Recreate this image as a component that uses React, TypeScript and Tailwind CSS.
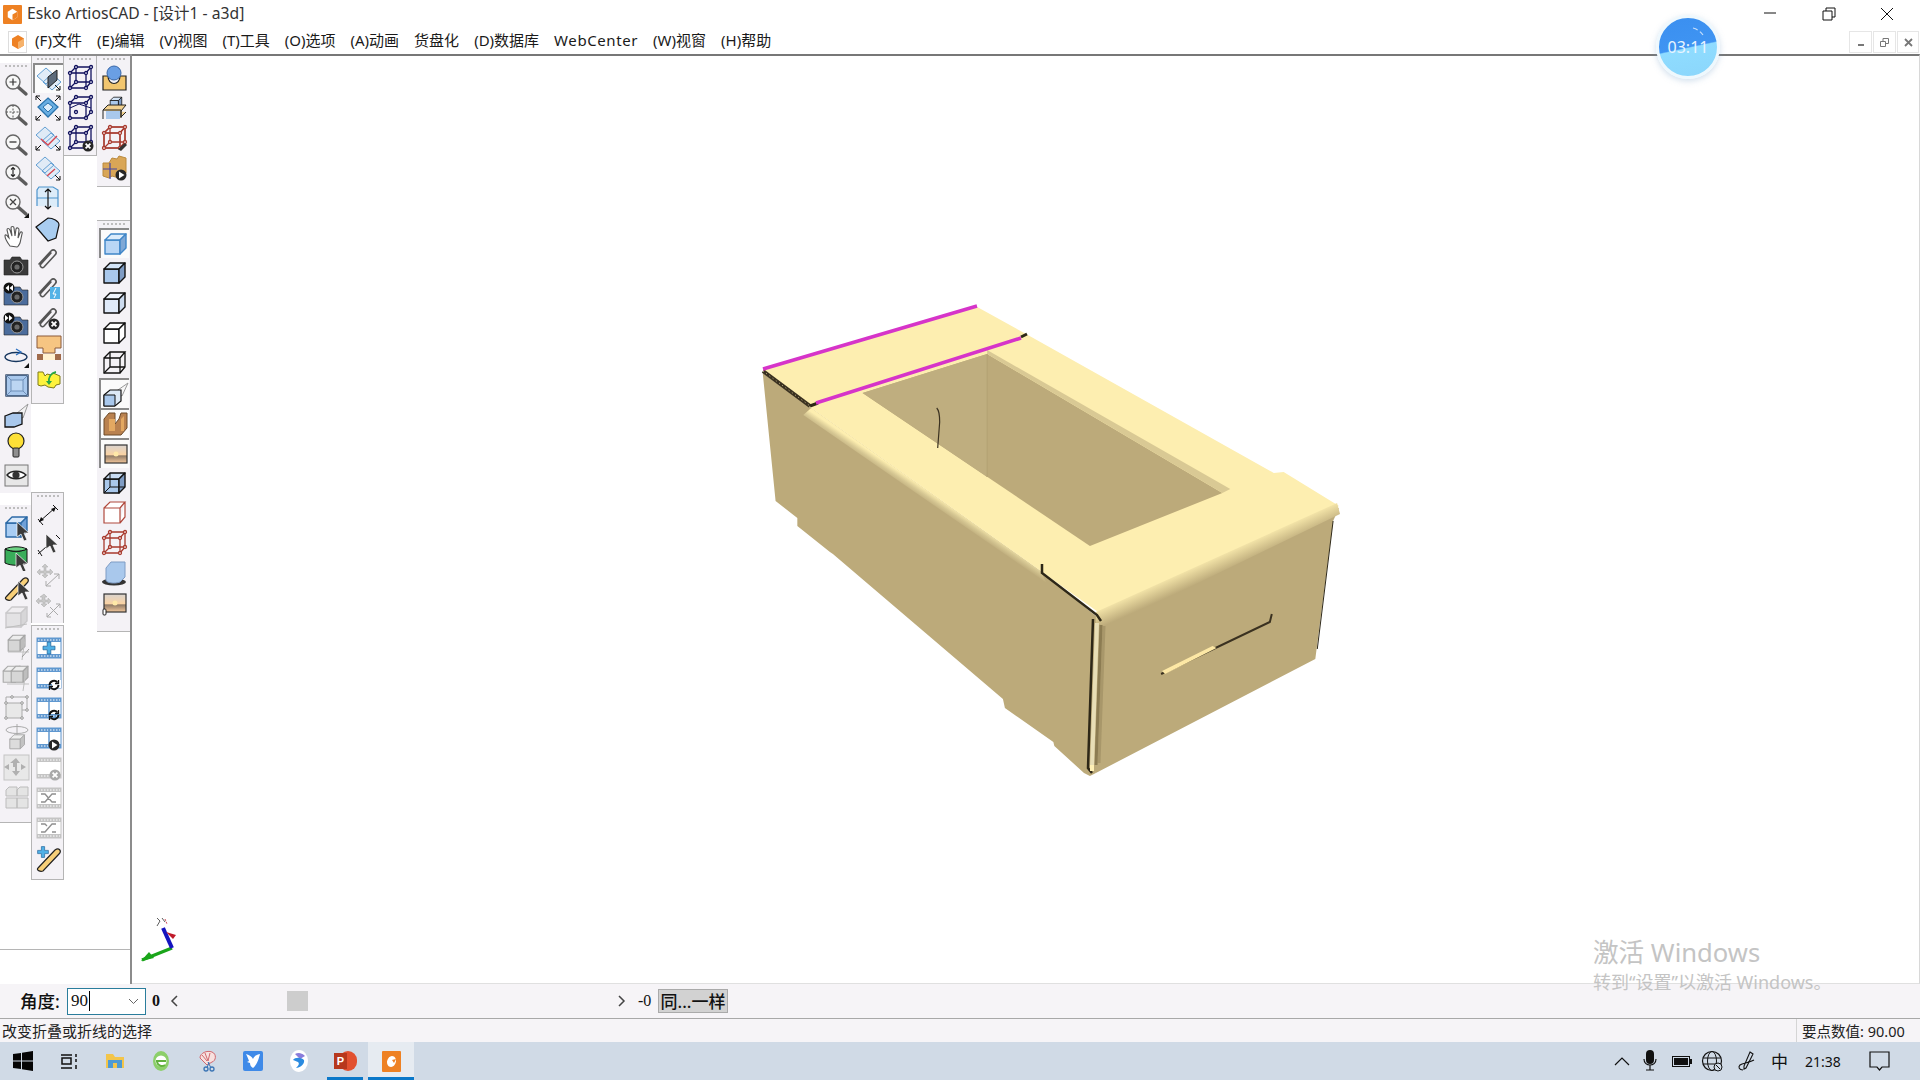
import type { ReactNode } from 'react';

const I = ({ children }: { children: ReactNode }) => (
  <svg width="28" height="28" viewBox="0 0 28 28" className="block">
    {children}
  </svg>
);

// solid cube used all over the view toolbars
const Cube = ({ f = '#a9c8ec', t = '#d3e4f7', s = '#7f9cc4', k = '#111', w = 1.4 }) => (
  <g stroke={k} strokeWidth={w} strokeLinejoin="round">
    <path d="M4 10h15v14H4z" fill={f} />
    <path d="M4 10l6-6h15l-6 6z" fill={t} />
    <path d="M19 10l6-6v14l-6 6z" fill={s} />
  </g>
);

const Wire = ({ k = '#12125e', hidden = true, knobs = false }) => (
  <g stroke={k} strokeWidth="1.3" fill="none">
    <path d="M4 9h16v15H4zM4 9l6-6h15l-5 6M25 3v15l-5 6" />
    {hidden && <path d="M10 3v15H25M10 18l-6 6" />}
    {knobs &&
      [[4, 9], [20, 9], [4, 24], [20, 24], [10, 3], [25, 3], [25, 18], [10, 18]].map(([x, y]) => (
        <circle key={`${x}-${y}`} cx={x} cy={y} r="1.5" fill="#fff" />
      ))}
  </g>
);

const Mag = ({ children }: { children?: ReactNode }) => (
  <I>
    <path d="M16 16l8 7" stroke="#5c5c5c" strokeWidth="3.4" strokeLinecap="round" />
    <circle cx="11" cy="11" r="7" fill="#f7f7f7" stroke="#666" strokeWidth="1.4" />
    {children}
  </I>
);

const Fold = ({ line, dark }: { line?: string; dark?: boolean }) => (
  <g fill="#dbe9f6" stroke="#63a0d4" strokeWidth="1">
    <path d="M2 11l9-8 9 8-9 8zM8 17l9-8 9 8-9 8z" fillOpacity="0.8" />
    {line && <path d="M7 15l7 6 9-9" fill="none" stroke={line} strokeWidth="1.4" />}
    {dark && <path d="M13 12l9-7v10l-9 8z" fill="#5d6b7b" stroke="#222" />}
  </g>
);

const Corner = ({ x, y, r = 0 }: { x: number; y: number; r?: number }) => (
  <path d="M0 0h4M0 0v4M0 0l5 5" transform={`translate(${x} ${y}) rotate(${r})`} stroke="#111" strokeWidth="1" fill="none" />
);

const Cursor = ({ x = 14, y = 8 }: { x?: number; y?: number }) => (
  <path
    d="M0 0v15l4-3 3 7 3-1-3-7h5z"
    transform={`translate(${x} ${y})`}
    fill="#3a3a3a"
    stroke="#fff"
    strokeWidth="0.7"
  />
);

const Badge = ({ kind, x = 20, y = 20 }: { kind: 'x' | 'play' | 'rot' | 'xg'; x?: number; y?: number }) => {
  if (kind === 'rot')
    return (
      <g transform={`translate(${x} ${y})`} fill="none" stroke="#111" strokeWidth="1.9">
        <path d="M-4.5 0a4.5 4.5 0 0 1 8-2.5M4.5 0a4.5 4.5 0 0 1-8 2.5" />
        <path d="M4.5-5v3.5h-3.5M-4.5 5v-3.5h3.5" strokeWidth="1.3" />
      </g>
    );
  return (
    <g transform={`translate(${x} ${y})`}>
      <circle r="5.5" fill={kind === 'xg' ? '#a9a9a9' : '#262626'} />
      {kind === 'play' ? (
        <path d="M-2-3.5l5.5 3.5-5.5 3.5z" fill="#fff" />
      ) : (
        <path d="M-2.4-2.4l4.8 4.8M2.4-2.4l-4.8 4.8" stroke="#fff" strokeWidth="1.8" />
      )}
    </g>
  );
};

const Clip = ({ c = '#555' }: { c?: string }) => (
  <path
    d="M5 19L17 6c3-3 7 1 4 4L10 22c-2 2-5-1-3-3l10-11"
    fill="none"
    stroke={c}
    strokeWidth="1.6"
    strokeLinecap="round"
  />
);

const Camera = ({ c = '#3a3a3a', arrow }: { c?: string; arrow?: 'l' | 'r' }) => (
  <I>
    <path d="M2 9h6l2-3h8l2 3h6v15H2z" fill={c} stroke="#222" strokeWidth="0.6" />
    <circle cx="15" cy="16" r="6" fill="#222" stroke="#999" strokeWidth="1" />
    <circle cx="15" cy="16" r="2.6" fill="#6a6a6a" />
    {arrow && (
      <g>
        <circle cx="7" cy="7" r="5.5" fill="#111" />
        <path d={arrow === 'l' ? 'M7 4L3.5 7 7 10zM11 4L7.500 7l3.500 3z' : 'M3 4l3.500 3L3 10zM7 4l3.500 3L7 10z'} fill="#fff" />
      </g>
    )}
  </I>
);

const Film = ({ split, c = '#5f97cf', children }: { split?: boolean; c?: string; children?: ReactNode }) => (
  <g>
    <rect x="3" y="4" width="24" height="20" fill="#fff" stroke={c} strokeWidth="1" />
    <rect x="3" y="4" width="24" height="4" fill={c} />
    <rect x="3" y="20" width="24" height="4" fill={c} />
    <path d="M4 6h22M4 22h22" stroke="#fff" strokeWidth="1" strokeDasharray="1.500 1.500" />
    {split && <path d="M15 4v20" stroke={c} strokeWidth="1.500" />}
    {children}
  </g>
);

const Plus = ({ x = 15, y = 14, s = 1 }: { x?: number; y?: number; s?: number }) => (
  <path
    d="M-1.800-6h3.600v4.200H6v3.600H1.800V6h-3.600V1.800H-6v-3.600h4.200z"
    transform={`translate(${x} ${y}) scale(${s})`}
    fill="#4fb0e6"
    stroke="#1b5e94"
    strokeWidth="0.7"
  />
);

const Tape = () => <path d="M4 24L21 6c4-3 7 1 4 4L9 27c-3 1-7-1-5-3z" fill="#f7cf78" stroke="#222" strokeWidth="1.200" />;

const Sun = () => (
  <g>
    <defs>
      <linearGradient id="sun" x1="0" y1="0" x2="0" y2="1">
        <stop offset="0" stopColor="#d9d3cf" />
        <stop offset="0.55" stopColor="#fbd3a3" />
        <stop offset="0.6" stopColor="#8f7a66" />
        <stop offset="0.68" stopColor="#a58b72" />
        <stop offset="1" stopColor="#f3c79b" />
      </linearGradient>
    </defs>
    <rect x="4" y="5" width="22" height="18" fill="url(#sun)" stroke="#333" strokeWidth="1.200" />
    <circle cx="15" cy="14" r="2.500" fill="#ffe9a8" />
  </g>
);

const G = '#bfbfbf';
const Col1A: ReactNode[] = [
  <Mag><path d="M7.500 11h7M11 7.500v7" stroke="#333" strokeWidth="1.200" /></Mag>,
  <Mag><path d="M4 11h14M11 4v14" stroke="#555" strokeWidth="1" strokeDasharray="2 1.500" /></Mag>,
  <Mag><path d="M7.500 11h7" stroke="#333" strokeWidth="1.300" /></Mag>,
  <Mag><path d="M11 6.500v9M9 8.500l2-2 2 2M9 13.500l2 2 2-2" stroke="#222" strokeWidth="1.100" fill="none" /></Mag>,
  <Mag><path d="M8 8l6 6M14 8l-6 6" stroke="#444" strokeWidth="1.300" /><path d="M27 27v-5l-5 5z" fill="#111" /></Mag>,
  <I><path d="M8 25c-3-4-5-8-5-10 0-2 2-1 3 1l1 1-2-8c0-2 2-2 3 0l2 6-1-8c0-2 3-2 3 0l1 8 1-7c1-2 3-1 3 1l-1 8 2-5c1-2 3-1 2 1l-2 9c-1 2-2 4-3 4z" fill="#fff" stroke="#555" strokeWidth="1.100" /></I>,
  <Camera />,
  <Camera c="#4b6c9c" arrow="l" />,
  <Camera c="#4b6c9c" arrow="r" />,
  <I><ellipse cx="14" cy="16" rx="11" ry="4.500" fill="none" stroke="#16365e" strokeWidth="1.300" /><path d="M14 8l5 3-5 3" fill="none" stroke="#2b6fc0" strokeWidth="1.300" /><path d="M27 27v-5l-5 5z" fill="#111" /></I>,
  <I><rect x="4" y="4" width="22" height="21" fill="#a9c8ec" stroke="#1d3556" strokeWidth="1.300" /><rect x="9" y="9" width="12" height="11" fill="#bcd6f2" stroke="#6f8fb8" /><path d="M4 4l5 5M26 4l-5 5M4 25l5-5M26 25l-5-5" stroke="#6f8fb8" /></I>,
  <I><path d="M14 13L26 3l-5 14z" fill="#f2f2f2" stroke="#999" /><path d="M3 15l8-3h9v11l-8 3H3z" fill="#a9c8ec" stroke="#111" strokeWidth="1.300" /></I>,
  <I><circle cx="14" cy="10" r="8" fill="#fde036" stroke="#222" strokeWidth="1.200" /><rect x="11" y="17" width="6" height="9" rx="1" fill="#8f8f8f" stroke="#222" /></I>,
  <I><rect x="3" y="4" width="23" height="21" fill="#e7e7e7" stroke="#777" /><path d="M5 14c4-5 14-5 19 0-5 5-15 5-19 0z" fill="#fff" stroke="#222" strokeWidth="1.400" /><circle cx="14" cy="14" r="3.600" fill="#333" /></I>,
];

const Col1B: ReactNode[] = [
  <I><Cube f="#a9cdf3" t="#d9e9fa" s="#6fa0d8" k="#2c6aa6" /><Cursor x={15} y={9} /></I>,
  <I><path d="M3 6c6 3 16 3 22 0v14c-6 3-16 3-22 0z" fill="#39ad5a" stroke="#111" /><path d="M3 6c6-3 16-3 22 0-6 3-16 3-22 0z" fill="#6dd284" stroke="#111" /><Cursor x={14} y={10} /></I>,
  <I><Tape /><Cursor x={16} y={8} /></I>,
  <I><g opacity="0.45"><Cube f="#cfcfcf" t="#e9e9e9" s="#b5b5b5" k="#999" /></g><path d="M3 25l22-4" stroke={G} strokeWidth="1" /></I>,
  <I><g transform="translate(3 -1) scale(.8)"><Cube f="#d6d6d6" t="#ededed" s="#bdbdbd" k="#a5a5a5" /></g><path d="M6 19h21M23 6l-3 21" stroke={G} /><path d="M20 24l7-8" stroke="#999" /></I>,
  <I><g transform="translate(-2 0) scale(.8)"><Cube f="#e2e2e2" t="#f0f0f0" s="#c9c9c9" k="#aaa" /></g><g transform="translate(6 0) scale(.8)"><Cube f="#d6d6d6" t="#ededed" s="#bdbdbd" k="#a5a5a5" /></g><path d="M5 21h22M24 8l-3 20" stroke={G} /></I>,
  <I><rect x="4" y="10" width="16" height="15" fill="#e8e8e8" stroke="#aaa" /><path d="M4 10V4h21v13h-5" fill="none" stroke="#aaa" /><g fill="#eee" stroke="#999">{[[4, 10], [20, 10], [4, 25], [20, 25], [10, 4], [25, 4], [25, 17]].map(([x, y]) => <circle key={`${x}${y}`} cx={x} cy={y} r="1.300" />)}</g></I>,
  <I><g transform="translate(5 9) scale(.7)"><Cube f="#dcdcdc" t="#efefef" s="#c2c2c2" k="#aaa" /></g><ellipse cx="15" cy="7" rx="11" ry="3.500" fill="none" stroke="#aaa" /><path d="M15 1v11" stroke="#aaa" /></I>,
  <I><rect x="2" y="2" width="25" height="25" fill="#e8e8e8" stroke="#c4c4c4" /><path d="M14 5l4 5h-3v4h4v-3l5 3-5 3v-3h-4v4h3l-4 5-4-5h3v-4H7v3l-5-3 5-3v3h4v-4H8z" fill="#b0b0b0" /></I>,
  <I><g fill="#e4e4e4" stroke="#bcbcbc"><path d="M4 7l3-3h8v9H4zM15 7l3-3h8v9H15zM4 15h11v10H4zM15 15h11v10H15z" /></g></I>,
];

const Col2A: ReactNode[] = [
  <I><Fold dark /><Corner x={25} y={25} r={180} /></I>,
  <I><path d="M14 4l10 9-10 10L4 13z" fill="#69aee2" stroke="#2b74ad" strokeWidth="1.300" /><path d="M14 9l5 4-5 5-5-5z" fill="#dcecf9" stroke="#2b74ad" /><Corner x={2} y={2} /><Corner x={26} y={2} r={90} /><Corner x={2} y={26} r={270} /><Corner x={26} y={26} r={180} /></I>,
  <I><Fold line="#d8454f" /><Corner x={2} y={26} r={270} /><Corner x={26} y={26} r={180} /></I>,
  <I><Fold /><path d="M13 22l8-7" stroke="#d8454f" strokeWidth="1.400" /><Corner x={26} y={26} r={180} /></I>,
  <I><path d="M3 22V6l2-3h14l5 3v17M3 14h21" fill="#dcecf9" stroke="#4d94cc" strokeWidth="1.200" /><path d="M14 5v20M11 8l3-3 3 3M11 22l3 3 3-3" fill="none" stroke="#111" strokeWidth="1.200" /></I>,
  <I><path d="M2 13l12-9c5 0 11 3 11 7l-3 13-8 3z" fill="#a9cdf0" stroke="#111" strokeWidth="1.200" /></I>,
  <I><g transform="translate(0 1)"><Clip /></g></I>,
  <I><Clip /><rect x="16" y="13" width="10" height="12" fill="#53b2e6" /><path d="M22 14l-3 6h3l-2 4" stroke="#fff" fill="none" /></I>,
  <I><Clip /><Badge kind="x" x={20} y={20} /></I>,
  <I><path d="M3 2h24v12h-6v5H9v-5H3z" fill="#f6c582" stroke="#8b5a3a" /><rect x="3" y="20" width="24" height="6" fill="#fff1cf" /><rect x="3" y="20" width="6" height="6" fill="#a06b4b" /><rect x="21" y="20" width="6" height="6" fill="#a06b4b" /></I>,
  <I><path d="M4 8h5l2 4 2-2 4 1 2-2 7 3v8l-4 1-2 3-6-1-3-2-4 1-3-1z" fill="#fdf23d" stroke="#7e7a1a" /><path d="M15 19c-1-6 2-10 7-11" fill="none" stroke="#28a745" strokeWidth="1.800" /><path d="M12 17l3 4 3-4z" fill="#28a745" /></I>,
];

const Col2B: ReactNode[] = [
  <I><path d="M5 21L22 6M4 18l5 6M19 4l5 5" stroke="#111" strokeWidth="1" fill="none" /><path d="M5 21l2-5 3 3zM22 6l-5 2 3 3z" fill="#111" /></I>,
  <I><path d="M4 23l8-7M4 19l4 6M22 4l4 4" stroke="#111" strokeWidth="1" /><Cursor x={12} y={3} /></I>,
  <I><path d="M11 3l3 3h-2v4h4V8l3 3-3 3v-2h-4v2h2l-3 3-3-3h2v-2H6v2l-3-3 3-3v2h4V6H8z" fill="#c8c8c8" stroke="#aaa" strokeWidth="0.500" /><path d="M12 25L25 13M25 13v5M25 13h-5M12 25v-5M12 25h5" stroke="#aaa" fill="none" /></I>,
  <I><path d="M10 3l3 3h-2v3h3V7l3 3-3 3v-2h-3v2h2l-3 3-3-3h2v-2H5v2l-3-3 3-3v2h3V6H6z" fill="#c8c8c8" stroke="#aaa" strokeWidth="0.500" /><path d="M13 26l13-13M26 13v4M26 13h-4M13 26v-4M13 26h4M16 16l8 8" stroke="#aaa" fill="none" /></I>,
];

const Col2C: ReactNode[] = [
  <I><Film><Plus /></Film></I>,
  <I><Film><path d="M18 16h9v8h-9z" fill="#fff" /><Badge kind="rot" x={20} y={21} /></Film></I>,
  <I><Film split><Badge kind="rot" x={20} y={21} /></Film></I>,
  <I><Film split><Badge kind="play" x={20} y={21} /></Film></I>,
  <I><Film c="#c4c4c4"><Badge kind="xg" x={21} y={21} /></Film></I>,
  <I><Film c="#c4c4c4"><path d="M7 10h4l7 8h4M7 18h4l7-8h4" stroke="#8f8f8f" strokeWidth="1.300" fill="none" /></Film></I>,
  <I><Film c="#c4c4c4"><path d="M22 10h-4l-7 8H7M7 10h4l2 2M18 18h4" stroke="#8f8f8f" strokeWidth="1.300" fill="none" /></Film></I>,
  <I><Tape /><Plus x={9} y={8} s={0.9} /></I>,
];

const Col3: ReactNode[] = [
  <I><Wire knobs /></I>,
  <I><Wire knobs hidden={false} /><path d="M4 14l9-4 12 4" stroke="#12125e" fill="none" /></I>,
  <I><Wire knobs /><Badge kind="x" x={22} y={22} /></I>,
];

const Col4A: ReactNode[] = [
  <I><path d="M3 12h5c0 10 12 10 12 0h6v14H3z" fill="#f2c66f" stroke="#222" strokeWidth="1.200" /><circle cx="14" cy="9" r="7" fill="#6a9fe4" stroke="#3967a8" /></I>,
  <I><g transform="translate(8 1) scale(.55)"><Cube /></g><path d="M3 16l5-5h18l-5 6v6l5-5M3 16h18v8M3 16v9" fill="#f2d18f" stroke="#222" /><rect x="6" y="17" width="14" height="8" fill="#a9c8ec" /></I>,
  <I><g><path d="M4 9h16v15H4zM4 9l6-6h15l-5 6M25 3v15l-5 6" fill="none" stroke="#a83a2e" strokeWidth="1.200" /></g><Wire k="#a83a2e" knobs /><path d="M18 25l7-6 2 2-6 6z" fill="#333" /></I>,
  <I><path d="M3 9h6l3-5 5 1 2-3 7 2v15l-5 1-2 4-7-2-3 2-6-2z" fill="#d9a657" stroke="#b98a3f" /><path d="M3 15h14M10 9v16" stroke="#4246a8" strokeWidth="1.200" /><Badge kind="play" x={21} y={21} /></I>,
];

const Col4B: ReactNode[] = [
  <I><Cube f="#b9d6f5" t="#dcecfb" s="#7fa8d6" k="#3f86c8" /></I>,
  <I><Cube /></I>,
  <I><Cube f="#dfeafa" t="#eef4fc" s="#ccdbef" /></I>,
  <I><Cube f="#fff" t="#fff" s="#fff" /></I>,
  <I><Wire k="#111" /></I>,
  <I><path d="M14 12L27 3l-6 13z" fill="#f7f7f7" stroke="#999" /><path d="M3 15l6-5h11v11l-6 5H3z" fill="#dde9f6" stroke="#111" strokeWidth="1.200" /><path d="M3 15h11v11H3z" fill="#a9c8ec" stroke="#111" /></I>,
  <I><path d="M3 9l5-6h6v11l4-5 2-6h6v15l-6 7H3z" fill="#b9814f" stroke="#6c4a2a" /><path d="M8 9v12h6V9zM20 9v12h3V6z" fill="#e3a861" /></I>,
  <I><Sun /></I>,
  <I><g><Cube f="#a9c8ec" t="#c9dcf3" s="#7f9cc4" /></g><path d="M10 4v14h15M10 18l-6 6" stroke="#111" fill="none" /></I>,
  <I><path d="M4 9h16v15H4zM4 9l6-6h15l-5 6M25 3v15l-5 6M4 13" fill="#fff" stroke="#b0493d" strokeWidth="1.200" /></I>,
  <I><Wire k="#a83a2e" knobs /></I>,
  <I><ellipse cx="14" cy="23" rx="12" ry="3.500" fill="#333" /><path d="M6 9l5-6h14v15l-5 5c-5 2-14 1-14-2z" fill="#a9c8ec" stroke="#7f9cc4" /></I>,
  <I><Sun /><rect x="3" y="20" width="3" height="6" rx="1" fill="#fff" stroke="#222" /></I>,
];

const Toolbar = ({ items, pressed = [], className }: { items: ReactNode[]; pressed?: number[]; className: string }) => (
  <div className={`flex flex-col items-center bg-[#f4f2f6] ${className}`}>
    <div className="h-[5px] w-[22px] shrink-0 mt-[2px] border-t-2 border-dotted border-[#bdbdbd]" />
    {items.map((it, i) => (
      <div
        key={i}
        className={`flex items-center justify-center h-[30px] w-[30px] shrink-0 ${
          pressed.includes(i) ? 'border-t-2 border-l-2 border-[#8a8a8a] bg-[#fbfbfb]' : ''
        }`}
      >
        {it}
      </div>
    ))}
  </div>
);

function Box() {
  return (
    <svg className="absolute left-[608px] top-[235px]" width="620" height="500" viewBox="740 290 620 500">
      <defs>
        <linearGradient id="bevelFront" gradientUnits="userSpaceOnUse" x1="1224" y1="552" x2="1232" y2="570">
          <stop offset="0" stopColor="#fdeeb0" />
          <stop offset="1" stopColor="#bcaa7a" />
        </linearGradient>
        <linearGradient id="bevelLeft" gradientUnits="userSpaceOnUse" x1="928" y1="488" x2="922" y2="497">
          <stop offset="0" stopColor="#fdeeb0" />
          <stop offset="0.5" stopColor="#d6c793" />
          <stop offset="1" stopColor="#bcaa7a" />
        </linearGradient>
      </defs>
      <g transform="translate(740 0) scale(0.9885 1) translate(-740 0)">
        {/* left wall with its tabs */}
        <path
          d="M763 372L812 407 1044 570 1100 615 1110 623 1100 772 1094 775 1088 772 1058 745 1057 741 1008 707 1006 698 834 553 831 551 798 525 798 517 776 500z"
          fill="#bcaa7a"
        />
        {/* end wall */}
        <path d="M1100 618L1346 507 1340 520 1322 658 1100 772z" fill="#bcaa7a" />
        {/* top frame */}
        <path d="M763 369L980 306 1033 335 1280 472 1290 471 1346 505 1108 615 1044 570 812 407z" fill="#fdeeb0" />
        {/* opening */}
        <path d="M864 392L990 353 1228 492 1094 545z" fill="#bcaa7a" />
        <path d="M864 392L990 353V476z" fill="#bfae7f" />
        <path d="M990 349L1236 488 1228 492 990 353z" fill="#d9c994" />
        <path d="M990 353V476" stroke="#b2a173" strokeWidth="1" />
        <path d="M939 407c3 3 3 8 3 14l-2 26" stroke="#3a3120" strokeWidth="1.200" fill="none" />
        {/* rounded edges */}
        <path d="M812 407L1044 570 1050 582 804 414z" fill="url(#bevelLeft)" />
        <path d="M1100 611L1344 502 1347 513 1112 626 1100 622z" fill="url(#bevelFront)" />
        {/* right wall edge and slot */}
        <path d="M1340 520L1324 648" stroke="#2d2717" strokeWidth="1" />
        <path d="M1166 673L1276 621 1278 613" stroke="#3a3120" strokeWidth="2" fill="none" />
        <path d="M1167 670L1218 645 1222 647 1170 673z" fill="#fde8a5" />
      </g>
      {/* post at the front corner */}
      <g fill="none">
        <path d="M1104 625L1099 762" stroke="#a8976a" strokeWidth="3" />
        <path d="M1101 624L1096 764" stroke="#8c7c52" strokeWidth="3" />
        <path d="M1097 622L1092 766" stroke="#e8deb6" strokeWidth="4" />
        <path d="M1093 618L1088 767 1092 772" stroke="#2d2717" strokeWidth="2.500" />
        <path d="M1092 764v6" stroke="#fff0b5" strokeWidth="4" />
        {/* cut lines */}
        <path d="M1042 563V572L1097 614 1101 620" stroke="#2d2717" strokeWidth="2.500" />
        <path d="M763 370L810 405" stroke="#3a3120" strokeWidth="4" />
        <path d="M763 370L810 405" stroke="#cbbd8c" strokeWidth="1" strokeDasharray="1 3" />
        <path d="M810 405L818 402M1021 336L1027 333" stroke="#2d2717" strokeWidth="3" />
        {/* magenta fold lines */}
        <path d="M763 368L977 305M816 402L1021 337" stroke="#d634c9" strokeWidth="3.500" />
      </g>
    </svg>
  );
}

function Axis() {
  return (
    <svg className="absolute left-[5px] top-[860px]" width="50" height="50" viewBox="137 915 50 50">
      <path d="M172 947L142 959" stroke="#1aa51a" strokeWidth="3.500" />
      <path d="M149 951l-8 9 13-3z" fill="#1aa51a" />
      <path d="M172 947l-9-20" stroke="#1414c0" strokeWidth="4" />
      <path d="M166 931l7 7 3-4z" fill="#c01a2a" />
      <path d="M157 917l3 3-3 5M162 917l3 4" stroke="#333" strokeWidth="0.800" fill="none" />
      <path d="M165 918l2 5" stroke="#c01a2a" strokeWidth="0.800" strokeDasharray="2 1" />
    </svg>
  );
}

const AppLogo = ({ size }: { size: number }) => (
  <svg width={size} height={size} viewBox="0 0 20 20">
    <rect width="20" height="20" rx="1" fill="#ee8123" />
    <path d="M10 4l5 3v6l-5 3-5-3V7z" fill="#fff" />
    <path d="M10 10l5-3v6l-5 3z" fill="#ee8123" />
  </svg>
);

const menus = ['(F)文件', '(E)编辑', '(V)视图', '(T)工具', '(O)选项', '(A)动画', '货盘化', '(D)数据库', 'WebCenter', '(W)视窗', '(H)帮助'];

const TaskSlot = ({ children, active, running }: { children: ReactNode; active?: boolean; running?: boolean }) => (
  <div className={`relative flex items-center justify-center h-full w-[46px] ${active ? 'bg-[#e6ebf1]' : ''}`}>
    {children}
    {(active || running) && <div className={`absolute bottom-0 h-[3px] bg-[#0b78c9] ${active ? 'inset-x-0' : 'w-[36px]'}`} />}
  </div>
);

export default function App() {
  return (
    <div className="relative flex flex-col h-screen w-screen overflow-hidden bg-white text-[#1a1a1a] font-['Noto_Sans','Noto_Sans_CJK_SC',sans-serif]">
      {/* title bar */}
      <div className="flex items-center h-[30px] pl-[3px] pr-[3px] pb-[2px]">
        <AppLogo size={19} />
        <span className="ml-[5px] text-[15.700px] text-[#333]">Esko ArtiosCAD - [设计1 - a3d]</span>
        <div className="ml-auto flex items-center">
          <svg width="58" height="28" viewBox="0 0 58 28"><path d="M23 13h12" stroke="#111" /></svg>
          <svg width="58" height="28" viewBox="0 0 58 28"><path d="M24 11h9v9h-9zM27 11V8h9v9h-3" fill="none" stroke="#111" /></svg>
          <svg width="60" height="28" viewBox="0 0 60 28"><path d="M24 8l12 12M36 8L24 20" stroke="#111" /></svg>
        </div>
      </div>

      {/* menu bar */}
      <div className="flex items-center h-[24px] pl-[8px] pr-[1px] text-[15px]">
        <div className="flex items-center justify-center w-[19px] h-[22px] border border-[#ddd] bg-white">
          <svg width="14" height="14" viewBox="0 0 14 14"><path d="M7 0l6 3.500v7L7 14l-6-3.500v-7z" fill="#ee8123" /><path d="M7 7l6-3.500v7L7 14z" fill="#f6b26b" /></svg>
        </div>
        <div className="flex items-center gap-[15px] ml-[8px] pb-[3px]">
          {menus.map(m => (
            <span key={m} className={m === 'WebCenter' ? 'tracking-[0.6px]' : ''}>{m}</span>
          ))}
        </div>
        <div className="ml-auto flex gap-[1px]">
          <div className="flex items-center justify-center w-[23px] h-[22px] border border-[#e6e6e6]"><div className="w-[6px] h-[2px] mt-[5px] bg-[#777]" /></div>
          <div className="flex items-center justify-center w-[23px] h-[22px] border border-[#e6e6e6]"><svg width="9" height="9" viewBox="0 0 9 9"><path d="M.5 3.500h5v5h-5zM3 3.500V.5h5.500v5H6" fill="none" stroke="#777" /></svg></div>
          <div className="flex items-center justify-center w-[22px] h-[22px] border border-[#e6e6e6]"><svg width="9" height="9" viewBox="0 0 9 9"><path d="M1 1l7 7M8 1L1 8" stroke="#777" strokeWidth="1.800" /></svg></div>
        </div>
      </div>

      {/* tool rail and 3D view */}
      <div className="flex flex-1 min-h-0">
        <div className="relative flex w-[132px] shrink-0 border-r-2 border-[#8c8c8c] border-t-2 border-t-[#8c8c8c] pr-[1px]">
          <div className="flex flex-col w-[31px] shrink-0">
            <Toolbar items={Col1A} className="mt-[7px] pb-[3px]" />
            <Toolbar items={Col1B} className="mt-[12px] h-[318px] border-b border-[#b5b5b5]" />
          </div>
          <div className="flex flex-col w-[33px] shrink-0">
            <Toolbar items={Col2A} pressed={[0]} className="h-[348px] border-x border-b border-[#b5b5b5]" />
            <Toolbar items={Col2B} className="mt-[88px] h-[131px] border-x border-t border-[#b5b5b5]" />
            <Toolbar items={Col2C} className="mt-[2px] h-[255px] border border-[#b5b5b5]" />
          </div>
          <div className="flex flex-col w-[33px] shrink-0">
            <Toolbar items={Col3} className="h-[100px] pb-[4px] border-r border-b border-[#b5b5b5]" />
          </div>
          <div className="flex flex-col w-[33px] shrink-0">
            <Toolbar items={Col4A} className="h-[131px] border-b border-[#b5b5b5]" />
            <Toolbar items={Col4B} pressed={[0, 5, 6, 7]} className="mt-[33px] h-[412px] border-t border-b border-[#b5b5b5]" />
          </div>
          <div className="absolute inset-x-0 bottom-[34px] border-t border-[#b5b5b5]" />
        </div>
        <div className="relative flex-1 border-t-2 border-t-[#777] border-r border-r-[#d8d8d8] border-b border-b-[#e0e0e0]">
          <Box />
          <Axis />
        </div>
      </div>

      {/* angle bar */}
      <div className="flex items-center h-[35px] bg-[#f6f4f7] border-b border-[#a8a8a8] pl-[20px] text-[17.500px] text-[#111]">
        <span className="w-[47px] font-medium">角度:</span>
        <div className="flex items-center justify-between w-[79px] h-[27px] bg-white border border-[#2a7d9c] pl-[3px] pr-[6px] text-[17px] font-['Liberation_Serif',serif]">
          <span className="border-r border-black pr-[1px] leading-[20px]">90</span>
          <svg width="11" height="7" viewBox="0 0 11 7"><path d="M1 1l4.500 4.500L10 1" fill="none" stroke="#666" /></svg>
        </div>
        <span className="ml-[6px] w-[18px] text-[16px] font-bold font-['Liberation_Serif',serif]">0</span>
        <div className="flex items-center w-[456px] h-[28px]">
          <svg width="10" height="12" viewBox="0 0 10 12"><path d="M7 1L2 6l5 5" fill="none" stroke="#444" strokeWidth="1.500" /></svg>
          <div className="ml-[107px] w-[21px] h-[20px] bg-[#cdcdcd]" />
          <svg className="ml-auto" width="10" height="12" viewBox="0 0 10 12"><path d="M3 1l5 5-5 5" fill="none" stroke="#444" strokeWidth="1.500" /></svg>
        </div>
        <span className="ml-[12px] w-[20px] text-[16px] font-['Liberation_Serif',serif]">-0</span>
        <div className="flex items-center justify-center w-[70px] h-[24px] bg-[#d2d2d2] border border-[#aaa] text-[17px] leading-none font-medium whitespace-nowrap">同...一样</div>
      </div>

      {/* status bar */}
      <div className="flex items-center h-[23px] pl-[2px] bg-[#f6f4f7] text-[15px] text-[#222]">
        <span className="pt-[2px]">改变折叠或折线的选择</span>
        <div className="ml-auto flex items-center h-full w-[124px] pl-[5px] pt-[2px] border-l border-[#d5d5d5] text-[14.500px] whitespace-nowrap">要点数值: 90.00</div>
      </div>

      {/* taskbar */}
      <div className="flex items-center h-[38px] bg-[#d0dae6] pr-[30px]">
        <TaskSlot><svg width="20" height="20" viewBox="0 0 20 20"><path d="M0 3l8-1v7.500H0zM9 1.800L20 0v9.500H9zM0 10.500h8V18l-8-1zM9 10.500h11V20L9 18.200z" fill="#050505" /></svg></TaskSlot>
        <TaskSlot><svg width="20" height="20" viewBox="0 0 20 20"><path d="M2 4h11M2 17h11M3 7h9v6H3zM17 3v3M17 8v3M17 14v4" fill="none" stroke="#111" strokeWidth="1.500" /></svg></TaskSlot>
        <TaskSlot><svg width="20" height="20" viewBox="0 0 20 20"><path d="M1 3h7l2 3h9v11H1z" fill="#f3c54a" /><rect x="3" y="9" width="14" height="8" fill="#4e9ad4" /><rect x="8" y="12" width="4" height="5" fill="#f3c54a" /></svg></TaskSlot>
        <TaskSlot><svg width="20" height="22" viewBox="0 0 20 22"><ellipse cx="10" cy="11" rx="8" ry="10" fill="#8ccf6a" /><circle cx="10" cy="11" r="5.500" fill="#fff" /><path d="M5 11h10M14 15c-3 2-7 1-8-3" stroke="#62b13e" strokeWidth="2" fill="none" /></svg></TaskSlot>
        <TaskSlot><svg width="22" height="24" viewBox="0 0 22 24"><path d="M4 9c0-5 7-8 12-6s4 9 0 10l-5 3z" fill="#f7e1df" stroke="#d1676e" /><path d="M6 6l5 6M9 4l3 8M14 4l-2 8" stroke="#d1676e" /><circle cx="10" cy="20" r="2" fill="none" stroke="#3c75b5" strokeWidth="1.300" /><circle cx="16" cy="20" r="2" fill="none" stroke="#3c75b5" strokeWidth="1.300" /><path d="M12 13l3 6M13 13l-2 6" stroke="#3c75b5" /></svg></TaskSlot>
        <TaskSlot><svg width="20" height="22" viewBox="0 0 20 22"><rect y="1" width="20" height="20" rx="2" fill="#3f8ae8" /><path d="M3 4c4 1 6 3 7 5 1-3 3-4 7-5-1 4-3 11-7 14-2-1-3-3-3-5l-3-1 2-1C5 8 4 6 3 4z" fill="#fff" /></svg></TaskSlot>
        <TaskSlot><svg width="22" height="24" viewBox="0 0 22 24"><ellipse cx="11" cy="12" rx="9" ry="11" fill="#fff" /><path d="M7 5a8 8 0 0 1 10 2l-5 3z" fill="#8a7ddb" /><path d="M5 11c2-3 8-3 11 0 1 4-4 8-8 8 2-2 4-4 2-6-2-1-3-1-5-2z" fill="#2b8be0" /></svg></TaskSlot>
        <TaskSlot running><div className="relative w-[20px] h-[20px]"><div className="absolute left-[4px] top-0 w-[18px] h-[20px] rounded-full bg-[#e2502f]" /><div className="absolute left-[-1px] top-[2px] w-[13px] h-[16px] bg-[#b7381d] text-white text-[11px] font-bold flex items-center justify-center leading-none font-['Liberation_Sans',sans-serif]">P</div></div></TaskSlot>
        <TaskSlot active><svg width="19" height="21" viewBox="0 0 19 21"><rect width="19" height="21" rx="1" fill="#ee8123" /><path d="M10 5c3 0 4 3 4 5s-2 6-5 6-4-3-4-5 2-6 5-6z" fill="#fff" /><path d="M10 9l4-1-2 4z" fill="#ee8123" /></svg></TaskSlot>
        <div className="ml-auto flex items-center text-[#111]">
          <svg width="18" height="12" viewBox="0 0 18 12"><path d="M2 10l7-7 7 7" fill="none" stroke="#111" strokeWidth="1.200" /></svg>
          <svg className="ml-[12px]" width="14" height="22" viewBox="0 0 14 22"><rect x="3" y="0" width="8" height="14" rx="4" fill="#111" /><path d="M1 9c0 8 12 8 12 0M7 15v5M3 20h8" fill="none" stroke="#111" strokeWidth="1.200" /></svg>
          <svg className="ml-[15px]" width="20" height="11" viewBox="0 0 20 11"><rect x=".5" y=".5" width="17" height="10" fill="none" stroke="#111" /><rect x="2" y="2" width="14" height="7" fill="#111" /><rect x="18" y="3" width="2" height="5" fill="#111" /></svg>
          <svg className="ml-[9px]" width="22" height="22" viewBox="0 0 22 22"><circle cx="11" cy="11" r="9.500" fill="none" stroke="#111" strokeWidth="1.200" /><ellipse cx="11" cy="11" rx="4.500" ry="9.500" fill="none" stroke="#111" /><path d="M2 8h18M2 14h18" stroke="#111" /><circle cx="17" cy="17" r="4" fill="#d0dae6" stroke="#111" /><path d="M15 15l4 4" stroke="#111" /></svg>
          <svg className="ml-[13px]" width="22" height="22" viewBox="0 0 22 22"><path d="M7 20c-4 0-5-3-3-5 3-2 9-2 14-5M14 2l3 2-7 14-2 1v-3z" fill="none" stroke="#111" strokeWidth="1.100" /></svg>
          <span className="ml-[13px] text-[17px] w-[20px] leading-none">中</span>
          <span className="ml-[14px] text-[14px] w-[42px] font-['Noto_Sans',sans-serif]">21:38</span>
          <svg className="ml-[22px]" width="21" height="21" viewBox="0 0 21 21"><path d="M1 1h19v15h-7l-2.500 3L8 16H1z" fill="none" stroke="#111" strokeWidth="1.200" /></svg>
        </div>
      </div>

      {/* floating timer */}
      <div className="absolute left-[1656px] top-[15px] flex items-center justify-center w-[64px] h-[64px] rounded-full border-[3px] border-[#eef8fd] shadow-[0_2px_6px_rgba(120,160,200,0.35)] bg-[linear-gradient(168deg,#3a8ff0_0%,#3f94f2_50%,#8fdcff_52%,#8bd6fb_100%)]">
        <span className="text-[16px] text-[#e9f5ff] leading-none font-['Noto_Sans',sans-serif]">03:11</span>
        <svg className="absolute left-[32px] top-[8px]" width="16" height="12" viewBox="0 0 16 12"><path d="M2 2c4 1 7 3 10 7" fill="none" stroke="#fff" strokeOpacity="0.7" strokeWidth="1.200" strokeDasharray="5 3" /></svg>
      </div>

      {/* activation watermark */}
      <div className="absolute left-[1593px] top-[935px] flex flex-col pointer-events-none text-[#c4c4c4]">
        <span className="text-[25.600px] leading-[36px]">激活 Windows</span>
        <span className="text-[18px] leading-[22px] whitespace-nowrap">转到“设置”以激活 Windows。</span>
      </div>
    </div>
  );
}
